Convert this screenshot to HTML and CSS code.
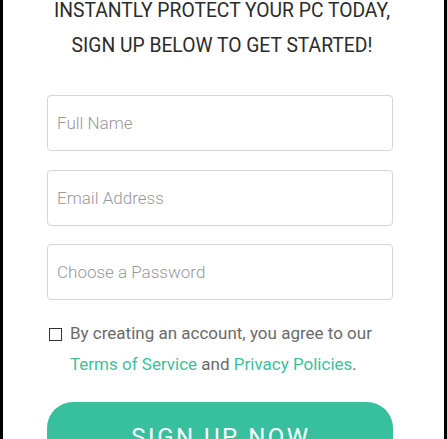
FILE: index.html
```html
<!DOCTYPE html>
<html>
<head>
<meta charset="utf-8">
<link rel="stylesheet" href="styles.css">
</head>
<body>
<div class="frame">
  <h1 class="title">INSTANTLY PROTECT YOUR PC TODAY,<br>SIGN UP BELOW TO GET STARTED!</h1>
  <form class="form">
    <input class="field" type="text" placeholder="Full Name">
    <input class="field" type="email" placeholder="Email Address">
    <input class="field" type="password" placeholder="Choose a Password">
    <label class="agree">
      <span class="box"></span>
      <span class="agree-text">By creating an account, you agree to our <a class="link" href="#">Terms of Service</a> and <a class="link" href="#">Privacy Policies</a>.</span>
    </label>
    <button class="submit" type="button">SIGN UP NOW</button>
  </form>
</div>
</body>
</html>
```
FILE: styles.css
```css
html, body {
  margin: 0;
  padding: 0;
  background: #000;
  overflow: hidden;
}
.frame {
  margin: 0 3px;
  height: 439px;
  background: #fff;
  font-family: Roboto, "Liberation Sans", sans-serif;
  overflow: hidden;
}
.title {
  margin: -7px 0 0 0;
  padding-right: 3px;
  text-align: center;
  font-weight: 400;
  font-size: 19.3px;
  line-height: 35px;
  color: #2b2b2b;
}
.form {
  margin: 32px 0 0 44px;
  width: 346px;
  display: flex;
  flex-direction: column;
}
.field {
  box-sizing: border-box;
  height: 56px;
  margin: 0 0 18.5px 0;
  padding: 0 9px;
  border: 1px solid #d6d6d6;
  border-radius: 4px;
  font-family: Roboto, "Liberation Sans", sans-serif;
  font-size: 17px;
  font-weight: 300;
  color: #333;
  outline: none;
}
.field::placeholder {
  color: #999;
}
.field:last-of-type {
  margin-bottom: 0;
}
.agree {
  display: flex;
  align-items: flex-start;
  margin-top: 17.5px;
  font-size: 17px;
  line-height: 31px;
  color: #6a6a6a;
}
.box {
  flex: none;
  box-sizing: border-box;
  width: 13px;
  height: 13px;
  border: 1px solid #333;
  margin: 10px 8px 0 2px;
}
.link {
  color: #3cbf9d;
  text-decoration: none;
}
.submit {
  margin-top: 22px;
  height: 70px;
  border: none;
  border-radius: 26px;
  background: #38bf9e;
  color: #fff;
  font-family: Roboto, "Liberation Sans", sans-serif;
  font-size: 24px;
  letter-spacing: 2.5px;
  padding: 0 0 0 2px;
}
```
